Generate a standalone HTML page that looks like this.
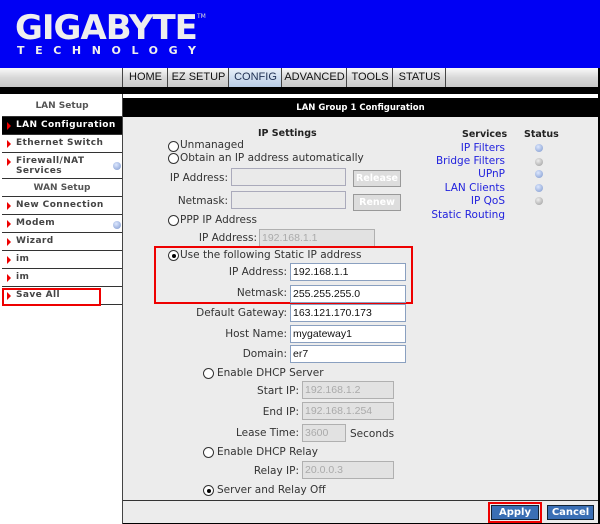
<!DOCTYPE html><html><head><meta charset="utf-8"><style>
*{margin:0;padding:0;box-sizing:border-box}
body{width:600px;height:524px;overflow:hidden;background:#000;font-family:"DejaVu Sans","Liberation Sans",sans-serif;font-size:10px;color:#333;position:relative}
.a{position:absolute;white-space:nowrap}
.hdr{left:0;top:0;width:600px;height:68px;background:#0000f4}
.nav{left:0;top:68px;width:598px;height:19px;background:linear-gradient(#fafafa,#d8d8d8 50%,#c8c8c8)}
.tab{top:68px;height:19px;border-left:1px solid #444;text-align:center;line-height:19px;font-family:"Liberation Sans",sans-serif;font-size:11px;color:#111}
.side{left:0;top:94px;width:122px;height:430px;background:#fff}
.si{left:2px;width:120px;height:18px;border-bottom:1px solid #333;font-weight:bold;font-size:9px;color:#444;line-height:17px;padding-left:14px;letter-spacing:.4px}
.si:before{content:"";position:absolute;left:5px;top:5px;border-left:4px solid #e00;border-top:4px solid transparent;border-bottom:4px solid transparent}
.sh{left:2px;width:120px;height:18px;border-bottom:1px solid #333;text-align:center;font-weight:bold;font-size:9px;color:#555;line-height:18px}
.main{left:123px;top:117px;width:475px;height:383px;background:#ececec}
.lbl{text-align:right;font-size:10.5px;color:#333}
.in{background:#fff;border:1px solid #8aa0c0;height:18px;font-size:10.5px;line-height:16px;padding-left:2px;color:#111;font-family:"Liberation Sans",sans-serif}
.dis{background:#e2e2e2;border:1px solid #b0b0b0;color:#aaa}
.r{width:11px;height:11px;border:1px solid #333;border-radius:50%;background:#fff}
.r.on:after{content:"";position:absolute;left:2.5px;top:2.5px;width:4px;height:4px;border-radius:50%;background:#000}
.lk{color:#2222dd;font-size:10.5px;text-align:right;width:120px;left:385px}
.dot{left:535px;width:8px;height:8px;border-radius:50%;background:radial-gradient(circle at 40% 35%,#dde8ff,#7c96cc)}
.dot.g{background:radial-gradient(circle at 40% 35%,#eee,#999)}
.btn{background:#3a6fb5;color:#fff;font-weight:bold;font-size:10px;text-align:center;line-height:14px;height:15px;border:1px solid #123}
</style></head><body>
<div class="a hdr"></div>
<div class="a" style="left:15px;top:8px;font:bold 34px 'DejaVu Sans',sans-serif;color:#eee;letter-spacing:-1px">GIGABYTE</div>
<div class="a" style="left:197px;top:13px;font-size:6px;color:#ddd">TM</div>
<div class="a" style="left:17px;top:44px;font:bold 11px 'DejaVu Sans',sans-serif;color:#eee;letter-spacing:10.6px">TECHNOLOGY</div>
<div class="a nav"></div>
<div class="a tab" style="left:122px;width:46px">HOME</div>
<div class="a tab" style="left:167px;width:62px">EZ SETUP</div>
<div class="a tab" style="left:228px;width:54px;background:linear-gradient(#e8f0fa,#b8cce4);color:#235">CONFIG</div>
<div class="a tab" style="left:281px;width:66px">ADVANCED</div>
<div class="a tab" style="left:346px;width:47px">TOOLS</div>
<div class="a tab" style="left:392px;width:54px">STATUS</div>
<div class="a tab" style="left:445px;width:0"></div>
<div class="a" style="left:123px;top:94px;width:475px;height:4px;background:#fff"></div>
<div class="a side"></div>
<div class="a sh" style="top:96px;height:21px;line-height:21px">LAN Setup</div>
<div class="a si" style="top:117px;background:#000;color:#fff">LAN Configuration</div>
<div class="a si" style="top:135px">Ethernet Switch</div>
<div class="a si" style="top:153px;height:26px;line-height:10px;padding-top:3px">Firewall/NAT<br>Services</div>
<div class="a dot" style="left:113px;top:162px"></div>
<div class="a sh" style="top:179px">WAN Setup</div>
<div class="a si" style="top:197px">New Connection</div>
<div class="a si" style="top:215px">Modem</div>
<div class="a dot" style="left:113px;top:221px"></div>
<div class="a si" style="top:233px">Wizard</div>
<div class="a si" style="top:251px">im</div>
<div class="a si" style="top:269px">im</div>
<div class="a si" style="top:287px">Save All</div>
<div class="a" style="left:2px;top:288px;width:99px;height:18px;border:2px solid #e00"></div>
<div class="a" style="left:122px;top:94px;width:1px;height:430px;background:#444"></div>
<div class="a main"></div>
<div class="a" style="left:123px;top:99px;width:475px;height:18px;text-align:center;color:#fff;font-weight:bold;font-size:8.5px;line-height:18px">LAN Group 1 Configuration</div>
<div class="a" style="left:258px;top:128px;font-weight:bold;font-size:9.5px;color:#222">IP Settings</div>
<div class="a r" style="left:168px;top:141px"></div><div class="a" style="left:180px;top:139px;font-size:10.5px">Unmanaged</div>
<div class="a r" style="left:168px;top:153px"></div><div class="a" style="left:180px;top:152px;font-size:10.5px">Obtain an IP address automatically</div>
<div class="a lbl" style="left:150px;width:78px;top:172px">IP Address:</div>
<div class="a in dis" style="left:231px;top:168px;width:115px;background:#eaeaea;border-color:#aab"></div>
<div class="a" style="left:353px;top:170px;width:48px;height:17px;background:#ddd;border:1px solid #999;color:#fff;font-weight:bold;text-align:center;line-height:15px;font-size:9.5px">Release</div>
<div class="a lbl" style="left:150px;width:78px;top:195px">Netmask:</div>
<div class="a in dis" style="left:231px;top:191px;width:115px;background:#eaeaea;border-color:#aab"></div>
<div class="a" style="left:353px;top:194px;width:48px;height:17px;background:#ddd;border:1px solid #999;color:#fff;font-weight:bold;text-align:center;line-height:15px;font-size:9.5px">Renew</div>
<div class="a r" style="left:168px;top:215px"></div><div class="a" style="left:180px;top:214px;font-size:10.5px">PPP IP Address</div>
<div class="a lbl" style="left:170px;width:87px;top:232px">IP Address:</div>
<div class="a in dis" style="left:259px;top:229px;width:116px">192.168.1.1</div>
<div class="a" style="left:154px;top:246px;width:259px;height:58px;border:2px solid #e00"></div>
<div class="a r on" style="left:168px;top:250px"></div><div class="a" style="left:180px;top:249px;font-size:10.5px">Use the following Static IP address</div>
<div class="a lbl" style="left:180px;width:107px;top:266px">IP Address:</div>
<div class="a in" style="left:290px;top:263px;width:116px">192.168.1.1</div>
<div class="a lbl" style="left:180px;width:107px;top:287px">Netmask:</div>
<div class="a in" style="left:290px;top:285px;width:116px">255.255.255.0</div>
<div class="a lbl" style="left:160px;width:127px;top:307px">Default Gateway:</div>
<div class="a in" style="left:290px;top:304px;width:116px">163.121.170.173</div>
<div class="a lbl" style="left:160px;width:127px;top:328px">Host Name:</div>
<div class="a in" style="left:290px;top:325px;width:116px">mygateway1</div>
<div class="a lbl" style="left:160px;width:127px;top:348px">Domain:</div>
<div class="a in" style="left:290px;top:345px;width:116px">er7</div>
<div class="a r" style="left:203px;top:368px"></div><div class="a" style="left:217px;top:367px;font-size:10.5px">Enable DHCP Server</div>
<div class="a lbl" style="left:200px;width:99px;top:385px">Start IP:</div>
<div class="a in dis" style="left:302px;top:381px;width:92px">192.168.1.2</div>
<div class="a lbl" style="left:200px;width:99px;top:406px">End IP:</div>
<div class="a in dis" style="left:302px;top:402px;width:92px">192.168.1.254</div>
<div class="a lbl" style="left:200px;width:99px;top:427px">Lease Time:</div>
<div class="a in dis" style="left:302px;top:424px;width:44px">3600</div>
<div class="a" style="left:350px;top:428px;font-size:10.5px">Seconds</div>
<div class="a r" style="left:203px;top:447px"></div><div class="a" style="left:217px;top:446px;font-size:10.5px">Enable DHCP Relay</div>
<div class="a lbl" style="left:200px;width:99px;top:465px">Relay IP:</div>
<div class="a in dis" style="left:302px;top:461px;width:92px">20.0.0.3</div>
<div class="a r on" style="left:203px;top:485px"></div><div class="a" style="left:217px;top:484px;font-size:10.5px">Server and Relay Off</div>
<div class="a" style="left:462px;top:129px;font-weight:bold;font-size:9.5px;color:#222">Services</div>
<div class="a" style="left:524px;top:129px;font-weight:bold;font-size:9.5px;color:#222">Status</div>
<div class="a lk" style="top:142px">IP Filters</div><div class="a dot" style="top:144px"></div>
<div class="a lk" style="top:155px">Bridge Filters</div><div class="a dot g" style="top:158px"></div>
<div class="a lk" style="top:168px">UPnP</div><div class="a dot" style="top:170px"></div>
<div class="a lk" style="top:182px">LAN Clients</div><div class="a dot" style="top:184px"></div>
<div class="a lk" style="top:195px">IP QoS</div><div class="a dot g" style="top:197px"></div>
<div class="a lk" style="top:209px">Static Routing</div>
<div class="a" style="left:123px;top:500px;width:475px;height:1px;background:#333"></div>
<div class="a" style="left:123px;top:501px;width:475px;height:22px;background:#ececec"></div>
<div class="a btn" style="left:491px;top:505px;width:48px">Apply</div>
<div class="a" style="left:488px;top:502px;width:54px;height:21px;border:2px solid #e00"></div>
<div class="a btn" style="left:547px;top:505px;width:47px">Cancel</div>
</body></html>
